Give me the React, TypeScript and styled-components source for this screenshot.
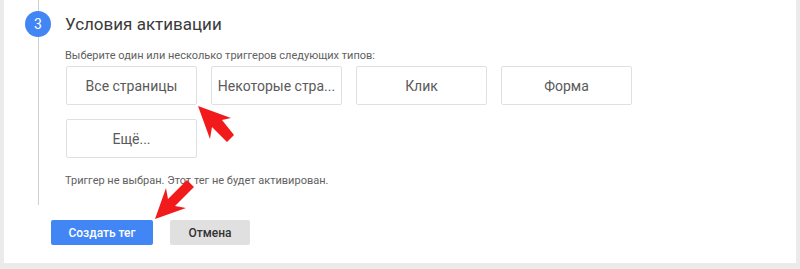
import React from 'react';
import styled, { createGlobalStyle } from 'styled-components';

const GlobalStyle = createGlobalStyle`
  html, body {
    margin: 0;
    padding: 0;
    background: #ebebeb;
  }
  body {
    font-family: Roboto, "Noto Sans", Arial, sans-serif;
  }
`;

const Page = styled.div`
  position: relative;
  width: 800px;
  height: 269px;
  padding: 0 4px 6px 4px;
  box-sizing: border-box;
  background: #ebebeb;
`;

const Card = styled.div`
  height: 100%;
  background: #ffffff;
  display: flex;
  flex-direction: column;
`;

const Step = styled.section`
  display: flex;
  padding-left: 21px;
`;

const Rail = styled.div`
  width: 26px;
  display: flex;
  flex-direction: column;
  align-items: center;
`;

const RailLine = styled.div<{ $grow?: boolean; $h?: number }>`
  width: 1px;
  background: #cfcfcf;
  height: ${(p) => (p.$h ? `${p.$h}px` : 'auto')};
  flex: ${(p) => (p.$grow ? 1 : 'none')};
`;

const StepNumber = styled.div`
  width: 26px;
  height: 26px;
  border-radius: 50%;
  background: #4285f4;
  color: #ffffff;
  font-size: 14px;
  line-height: 26px;
  text-align: center;
`;

const StepBody = styled.div`
  margin-left: 14px;
  padding-bottom: 17px;
  display: flex;
  flex-direction: column;
`;

const Title = styled.h2`
  margin: 11px 0 0 0;
  height: 26px;
  line-height: 26px;
  font-size: 17px;
  font-weight: 400;
  color: #3a3a3a;
`;

const Hint = styled.p<{ $top: number }>`
  margin: ${(p) => p.$top}px 0 0 0;
  font-size: 11px;
  line-height: 14px;
  color: #616161;
`;

const TileGrid = styled.div`
  margin: 3px 0 0 1px;
  display: grid;
  grid-template-columns: repeat(4, 131px);
  grid-auto-rows: 39px;
  column-gap: 14px;
  row-gap: 14px;
`;

const Tile = styled.button`
  box-sizing: border-box;
  border: 1px solid #e0e0e0;
  border-radius: 2px;
  background: #ffffff;
  padding: 0 4px;
  font-family: Roboto, "Noto Sans", Arial, sans-serif;
  font-size: 14px;
  font-weight: 400;
  color: #5a5a5a;
  white-space: nowrap;
  overflow: hidden;
  cursor: pointer;
`;

const Actions = styled.div`
  margin: 15px 0 0 47px;
  display: flex;
  gap: 17px;
`;

const ActionButton = styled.button<{ $primary?: boolean }>`
  height: 25px;
  width: ${(p) => (p.$primary ? '102px' : '80px')};
  border: none;
  border-radius: 2px;
  background: ${(p) => (p.$primary ? '#4285f4' : '#e0e0e0')};
  color: ${(p) => (p.$primary ? '#ffffff' : '#333333')};
  font-family: Roboto, "Noto Sans", Arial, sans-serif;
  font-size: 12px;
  font-weight: 500;
  cursor: pointer;
`;

const Overlay = styled.svg`
  position: absolute;
  left: 0;
  top: 0;
  width: 800px;
  height: 269px;
  pointer-events: none;
`;

const triggers = ['Все страницы', 'Некоторые стра...', 'Клик', 'Форма', 'Ещё...'];

export default function App() {
  return (
    <>
      <GlobalStyle />
      <Page>
        <Card>
          <Step>
            <Rail>
              <RailLine $h={11} />
              <StepNumber>3</StepNumber>
              <RailLine $grow />
            </Rail>
            <StepBody>
              <Title>Условия активации</Title>
              <Hint $top={12}>Выберите один или несколько триггеров следующих типов:</Hint>
              <TileGrid>
                {triggers.map((t) => (
                  <Tile key={t}>{t}</Tile>
                ))}
              </TileGrid>
              <Hint $top={16}>Триггер не выбран. Этот тег не будет активирован.</Hint>
            </StepBody>
          </Step>
          <Actions>
            <ActionButton $primary>Создать тег</ActionButton>
            <ActionButton>Отмена</ActionButton>
          </Actions>
        </Card>
        <Overlay viewBox="0 0 800 269">
          <polygon
            fill="#f21b1b"
            points="198,106 210,139 212,127 227,142 234,135 222,120 231,118"
          />
          <polygon
            fill="#f21b1b"
            points="155,219 166,188 168,199 187,180 194,187 175,206 186,208"
          />
        </Overlay>
      </Page>
    </>
  );
}
